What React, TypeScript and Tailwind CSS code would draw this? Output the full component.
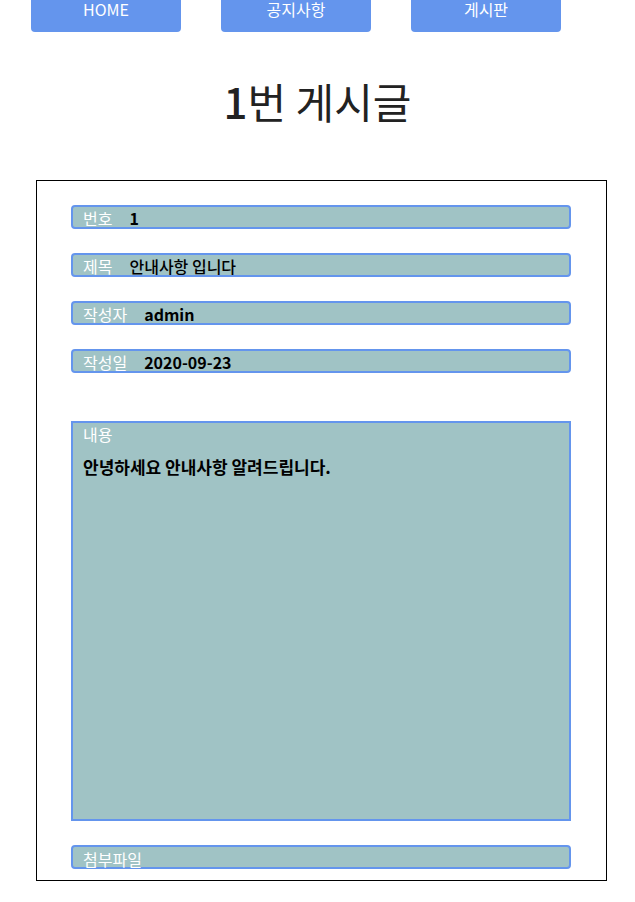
import React from 'react';

const FONT = "font-['Malgun_Gothic','Noto_Sans_CJK_KR',sans-serif]";

const FIELDS = [
  { label: '번호', value: '1', weight: 'font-bold' },
  { label: '제목', value: '안내사항 입니다', weight: 'font-medium' },
  { label: '작성자', value: 'admin', weight: 'font-bold' },
  { label: '작성일', value: '2020-09-23', weight: 'font-bold' },
];

export default function App() {
  return (
    <div className={`${FONT} w-[635px] h-[902px] bg-white overflow-hidden`}>
      {/* Top nav */}
      <nav className="flex gap-[40px] pl-[31px]">
        {['HOME', '공지사항', '게시판'].map((item) => (
          <div
            key={item}
            className="w-[150px] h-[32px] pt-[1px] rounded-b-[4px] bg-[#6495ed] text-white text-[16px] leading-[16px] flex justify-center"
          >
            {item}
          </div>
        ))}
      </nav>

      {/* Title */}
      <h1 className="mt-[44px] text-center text-[42px] leading-[50px] text-[#222]">
        <span className="font-medium">1</span>번 게시글
      </h1>

      {/* Post box */}
      <div className="mt-[54px] ml-[36px] w-[571px] h-[701px] border border-black pt-[24px] pl-[34px]">
        <div className="w-[500px] flex flex-col gap-[24px]">
          {FIELDS.map((f) => (
            <div
              key={f.label}
              className="h-[24px] rounded-[4px] border-2 border-[#6495ed] bg-[#a0c3c5] flex items-center pl-[10px] pt-[2px] text-[16px] leading-[22px]"
            >
              <span className="text-white">{f.label}</span>
              <span className={`ml-[17px] text-black ${f.weight}`}>{f.value}</span>
            </div>
          ))}

          <div className="mt-[24px] h-[400px] border-2 border-[#6495ed] bg-[#a0c3c5] pl-[10px] text-[16px] leading-[22px]">
            <div className="text-white">내용</div>
            <div className="mt-[11px] text-[17px] font-semibold text-black">안녕하세요 안내사항 알려드립니다.</div>
          </div>

          <div className="h-[24px] rounded-[4px] border-2 border-[#6495ed] bg-[#a0c3c5] flex items-center pl-[10px] pt-[4px] text-[16px] leading-[22px] text-white">
            첨부파일
          </div>
        </div>
      </div>
    </div>
  );
}
